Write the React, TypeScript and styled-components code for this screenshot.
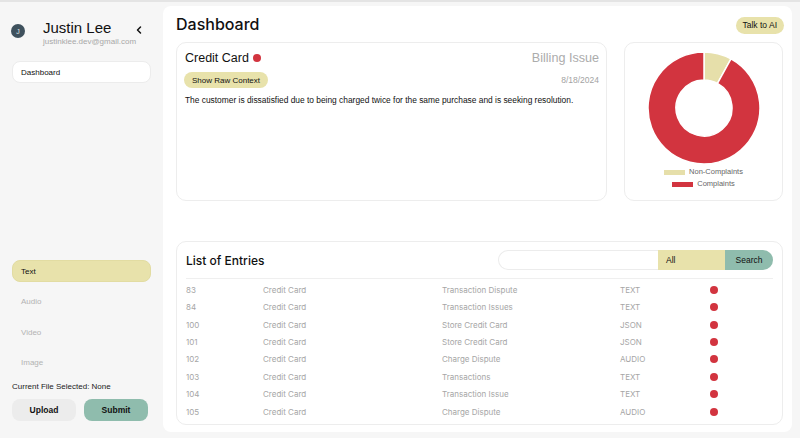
import styled, { createGlobalStyle } from 'styled-components';
import { useEffect, useRef } from 'react';
import { ChevronLeft } from 'lucide-react';

const GlobalStyle = createGlobalStyle`
  html, body {
    margin: 0;
    padding: 0;
    background: #f6f6f6;
  }
  * {
    box-sizing: border-box;
  }
  body {
    font-family: 'Liberation Sans', Arial, sans-serif;
    color: #111;
  }
`;

const colors = {
  yellow: '#e8e2ab',
  green: '#8fbcad',
  red: '#d2343f',
  muted: '#a3a3a3',
};

const Layout = styled.div`
  display: grid;
  grid-template-columns: 163px 1fr;
  height: 438px;
  border-top: 2px solid #e4e4e4;
`;

const Sidebar = styled.aside`
  display: flex;
  flex-direction: column;
  padding: 17px 12px 17px 11px;
`;

const Profile = styled.div`
  display: flex;
  align-items: flex-start;
  gap: 18px;
`;

const Avatar = styled.div`
  width: 14px;
  height: 14px;
  margin-top: 5px;
  border-radius: 50%;
  background: #3f515d;
  color: #dfe5e8;
  font-size: 7px;
  display: flex;
  align-items: center;
  justify-content: center;
`;

const ProfileText = styled.div`
  display: flex;
  flex-direction: column;
  flex: 1;
`;

const Name = styled.div`
  display: flex;
  align-items: center;
  justify-content: space-between;
  font-size: 15px;
  line-height: 17px;
  color: #111;
`;

const Email = styled.div`
  font-size: 8px;
  line-height: 9px;
  color: #a8a8a8;
  margin-top: 1px;
`;

const CollapseButton = styled.button`
  border: 0;
  background: none;
  padding: 0;
  margin-right: 6px;
  margin-top: 4px;
  display: flex;
  color: #111;
`;

const NavItem = styled.div<{ $active?: boolean; $white?: boolean }>`
  height: 22px;
  display: flex;
  align-items: center;
  padding-left: 8px;
  border-radius: 8px;
  font-size: 8px;
  color: ${(p) => (p.$active || p.$white ? '#111' : '#b3b3b3')};
  background: ${(p) => (p.$active ? colors.yellow : p.$white ? '#fff' : 'transparent')};
  border: 1px solid ${(p) => (p.$white ? '#ececec' : p.$active ? '#e2dca2' : 'transparent')};
`;

const TopNav = styled.div`
  margin-top: 15px;
  margin-left: 1px;
`;

const Spacer = styled.div`
  flex: 1;
`;

const MediaNav = styled.div`
  display: flex;
  flex-direction: column;
  gap: 8.5px;
  margin-left: 1px;
`;

const FileLabel = styled.div`
  font-size: 8px;
  line-height: 11px;
  margin-top: 7px;
  margin-left: 1px;
  color: #222;
`;

const ActionRow = styled.div`
  display: flex;
  gap: 8px;
  margin-top: 7.5px;
  margin-left: 1px;
`;

const ActionButton = styled.button<{ $primary?: boolean }>`
  width: 64px;
  height: 22px;
  border: 0;
  border-radius: 8px;
  font-family: 'Liberation Sans', Arial, sans-serif;
  font-weight: 700;
  font-size: 8.5px;
  color: #111;
  background: ${(p) => (p.$primary ? colors.green : '#ececec')};
`;

const Main = styled.main`
  margin: 4px 8px 6px 0;
  background: #fff;
  border-radius: 8px;
  padding: 0 9px 0 13px;
  display: flex;
  flex-direction: column;
`;

const Header = styled.header`
  height: 36px;
  display: flex;
  align-items: center;
  justify-content: space-between;
`;

const Title = styled.h1`
  margin: 0;
  font-family: Inter, 'Liberation Sans', sans-serif;
  font-weight: 500;
  font-size: 16px;
  color: #111;
`;

const Pill = styled.button`
  border: 0;
  background: ${colors.yellow};
  border-radius: 9px;
  font-family: 'Liberation Sans', Arial, sans-serif;
  font-size: 8.5px;
  color: #111;
  height: 17px;
  padding: 0 7px;
  margin-top: 2px;
  margin-right: -1px;
`;

const TopRow = styled.div`
  display: grid;
  grid-template-columns: 431px 159px;
  gap: 17px;
  height: 159px;
`;

const Card = styled.section`
  border: 1px solid #ededed;
  border-radius: 10px;
  background: #fff;
`;

const IssueCard = styled(Card)`
  padding: 6px 7px 0 8px;
`;

const IssueTop = styled.div`
  display: flex;
  align-items: center;
  justify-content: space-between;
  height: 18px;
`;

const IssueTitle = styled.div`
  display: flex;
  align-items: center;
  gap: 4px;
  font-size: 12.5px;
  color: #111;
`;

const Dot = styled.span<{ $size?: number }>`
  width: ${(p) => p.$size ?? 8}px;
  height: ${(p) => p.$size ?? 8}px;
  border-radius: 50%;
  background: ${colors.red};
  display: inline-block;
`;

const Category = styled.div`
  font-size: 12.6px;
  color: #acacac;
`;

const IssueMeta = styled.div`
  display: flex;
  align-items: center;
  justify-content: space-between;
  margin-top: 5px;
`;

const ContextButton = styled.button`
  border: 0;
  background: ${colors.yellow};
  border-radius: 8px;
  height: 16px;
  padding: 0 8px;
  font-family: 'Liberation Sans', Arial, sans-serif;
  font-size: 8px;
  color: #111;
  margin-left: -1px;
`;

const DateText = styled.div`
  font-size: 8.5px;
  color: #a3a3a3;
`;

const Summary = styled.p`
  margin: 7px 0 0;
  font-size: 8.4px;
  line-height: 11px;
  color: #111;
`;

const ChartCard = styled(Card)`
  display: flex;
  flex-direction: column;
  align-items: center;
  padding-top: 8px;
`;

const Legend = styled.div`
  display: flex;
  flex-direction: column;
  align-items: center;
  gap: 6px;
  margin-top: 4px;
`;

const LegendItem = styled.div`
  display: flex;
  align-items: center;
  gap: 4px;
  font-size: 7.5px;
  line-height: 6px;
  color: #666;
`;

const Swatch = styled.span<{ $color: string }>`
  width: 21px;
  height: 5px;
  background: ${(p) => p.$color};
`;

const ListCard = styled(Card)`
  margin-top: 40px;
  height: 184px;
  padding: 8px 9px 0 9px;
  display: flex;
  flex-direction: column;
`;

const ListHeader = styled.div`
  display: flex;
  align-items: center;
  justify-content: space-between;
  height: 20px;
`;

const ListTitle = styled.h2`
  margin: 0;
  font-family: Inter, 'Liberation Sans', sans-serif;
  font-weight: 500;
  font-size: 12px;
  color: #111;
`;

const SearchGroup = styled.div`
  display: flex;
  height: 20px;
`;

const SearchInput = styled.input`
  width: 160px;
  height: 20px;
  border: 1px solid #ececec;
  border-right: 0;
  border-radius: 10px 0 0 10px;
  outline: none;
`;

const FilterSelect = styled.div`
  width: 67px;
  background: ${colors.yellow};
  font-size: 8.5px;
  display: flex;
  align-items: center;
  padding-left: 8px;
  color: #111;
`;

const SearchButton = styled.button`
  width: 48px;
  border: 0;
  background: ${colors.green};
  border-radius: 0 10px 10px 0;
  font-family: 'Liberation Sans', Arial, sans-serif;
  font-size: 8.5px;
  color: #111;
`;

const Divider = styled.hr`
  border: 0;
  border-top: 1px solid #efefef;
  margin: 8px 0 0;
`;

const Rows = styled.div`
  height: 136px;
  overflow-y: auto;
  scrollbar-width: none;
  margin-top: 5px;
`;

const Row = styled.div`
  display: grid;
  grid-template-columns: 77px 179px 178px 90px 1fr;
  align-items: center;
  height: 17.45px;
  font-family: Inter, 'Liberation Sans', sans-serif;
  font-size: 8px;
  color: #a6a6a6;
`;

const entries = [
  { id: 83, product: 'Credit Card', issue: 'Transaction Dispute', type: 'TEXT' },
  { id: 84, product: 'Credit Card', issue: 'Transaction Issues', type: 'TEXT' },
  { id: 100, product: 'Credit Card', issue: 'Store Credit Card', type: 'JSON' },
  { id: 101, product: 'Credit Card', issue: 'Store Credit Card', type: 'JSON' },
  { id: 102, product: 'Credit Card', issue: 'Charge Dispute', type: 'AUDIO' },
  { id: 103, product: 'Credit Card', issue: 'Transactions', type: 'TEXT' },
  { id: 104, product: 'Credit Card', issue: 'Transaction Issue', type: 'TEXT' },
  { id: 105, product: 'Credit Card', issue: 'Charge Dispute', type: 'AUDIO' },
];

const slices = [
  { label: 'Non-Complaints', value: 8, color: '#e6dfaa' },
  { label: 'Complaints', value: 92, color: colors.red },
];

// builds a donut segment path (angles in degrees, 0 = top)
const arcPath = (start: number, end: number, r: number, ir: number, c: number) => {
  const pt = (a: number, rad: number) => {
    const t = ((a - 90) * Math.PI) / 180;
    return `${c + rad * Math.cos(t)} ${c + rad * Math.sin(t)}`;
  };
  const large = end - start > 180 ? 1 : 0;
  return [
    `M ${pt(start, r)}`,
    `A ${r} ${r} 0 ${large} 1 ${pt(end, r)}`,
    `L ${pt(end, ir)}`,
    `A ${ir} ${ir} 0 ${large} 0 ${pt(start, ir)}`,
    'Z',
  ].join(' ');
};

const Donut = () => {
  const total = slices.reduce((s, d) => s + d.value, 0);
  let angle = 0;
  return (
    <svg width="114" height="114" viewBox="0 0 114 114">
      {slices.map((s) => {
        const start = angle;
        angle += (s.value / total) * 360;
        return (
          <path
            key={s.label}
            d={arcPath(start, angle, 56, 28, 57)}
            fill={s.color}
            stroke="#fff"
            strokeWidth="1.5"
          />
        );
      })}
    </svg>
  );
};

const App = () => {
  const rowsRef = useRef<HTMLDivElement>(null);

  // the list is scrolled a little in the original view
  useEffect(() => {
    if (rowsRef.current) rowsRef.current.scrollTop = 3;
  }, []);

  return (
    <>
      <GlobalStyle />
      <Layout>
        <Sidebar>
          <Profile>
            <Avatar>J</Avatar>
            <ProfileText>
              <Name>
                Justin Lee
                <CollapseButton>
                  <ChevronLeft size={12} strokeWidth={3} />
                </CollapseButton>
              </Name>
              <Email>justinklee.dev@gmail.com</Email>
            </ProfileText>
          </Profile>
          <TopNav>
            <NavItem $white>Dashboard</NavItem>
          </TopNav>
          <Spacer />
          <MediaNav>
            <NavItem $active>Text</NavItem>
            <NavItem>Audio</NavItem>
            <NavItem>Video</NavItem>
            <NavItem>Image</NavItem>
          </MediaNav>
          <FileLabel>Current File Selected: None</FileLabel>
          <ActionRow>
            <ActionButton>Upload</ActionButton>
            <ActionButton $primary>Submit</ActionButton>
          </ActionRow>
        </Sidebar>

        <Main>
          <Header>
            <Title>Dashboard</Title>
            <Pill>Talk to AI</Pill>
          </Header>

          <TopRow>
            <IssueCard>
              <IssueTop>
                <IssueTitle>
                  Credit Card <Dot />
                </IssueTitle>
                <Category>Billing Issue</Category>
              </IssueTop>
              <IssueMeta>
                <ContextButton>Show Raw Context</ContextButton>
                <DateText>8/18/2024</DateText>
              </IssueMeta>
              <Summary>
                The customer is dissatisfied due to being charged twice for the same purchase and
                is seeking resolution.
              </Summary>
            </IssueCard>

            <ChartCard>
              <Donut />
              <Legend>
                {slices.map((s) => (
                  <LegendItem key={s.label}>
                    <Swatch $color={s.color} />
                    {s.label}
                  </LegendItem>
                ))}
              </Legend>
            </ChartCard>
          </TopRow>

          <ListCard>
            <ListHeader>
              <ListTitle>List of Entries</ListTitle>
              <SearchGroup>
                <SearchInput />
                <FilterSelect>All</FilterSelect>
                <SearchButton>Search</SearchButton>
              </SearchGroup>
            </ListHeader>
            <Divider />
            <Rows ref={rowsRef}>
              {entries.map((e) => (
                <Row key={e.id}>
                  <span>{e.id}</span>
                  <span>{e.product}</span>
                  <span>{e.issue}</span>
                  <span>{e.type}</span>
                  <Dot />
                </Row>
              ))}
            </Rows>
          </ListCard>
        </Main>
      </Layout>
    </>
  );
};

export default App;
